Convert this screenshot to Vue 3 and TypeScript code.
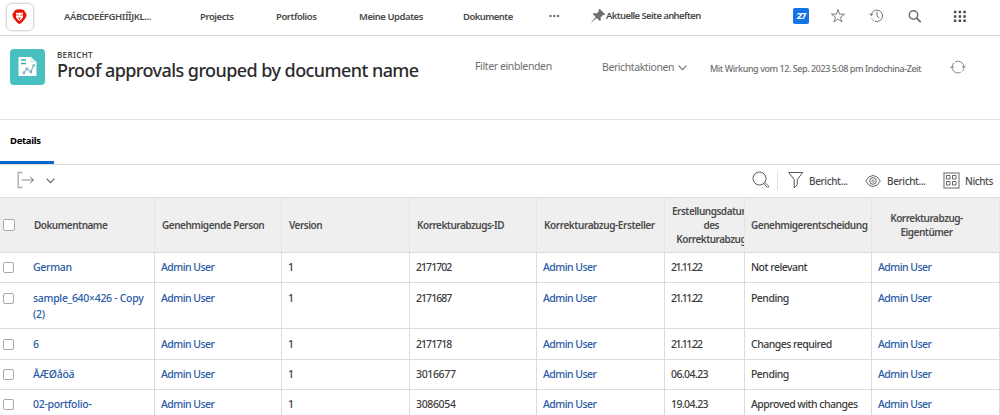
<script setup lang="ts">
interface Row {
  id: number
  name: string
  version: string
  proofId: string
  created: string
  decision: string
  height: number
}

const user = 'Admin User'
const headers: string[][] = [
  ['Dokumentname'], ['Genehmigende Person'], ['Version'], ['Korrekturabzugs-ID'],
  ['Korrekturabzug-Ersteller'], ['Erstellungsdatum', 'des', 'Korrekturabzug'], ['Genehmigerentscheidung'],
  ['Korrekturabzug-', 'Eigentümer'],
]
const rows: Row[] = [
  { id: 1, name: 'German', version: '1', proofId: '2171702', created: '21.11.22', decision: 'Not relevant', height: 30 },
  { id: 2, name: 'sample_640×426 - Copy (2)', version: '1', proofId: '2171687', created: '21.11.22', decision: 'Pending', height: 46 },
  { id: 3, name: '6', version: '1', proofId: '2171718', created: '21.11.22', decision: 'Changes required', height: 31 },
  { id: 4, name: 'ÅÆØåöä', version: '1', proofId: '3016677', created: '06.04.23', decision: 'Pending', height: 30 },
  { id: 5, name: '02-portfolio-', version: '1', proofId: '3086054', created: '19.04.23', decision: 'Approved with changes', height: 46 },
]

// Figures with many narrow ones are set tighter.
const isTight = (value: string): boolean => (value.match(/1/g) ?? []).length > 1
</script>

<template>
  <div class="page">
    <nav class="topbar">
      <span class="logo">
        <svg width="27" height="28" viewBox="0 0 27 28">
          <path d="M9.2 7Q13.500 5.300 17.800 7L20.600 11.500Q20.200 16.500 13.500 21.200Q6.800 16.500 6.400 11.500Z" fill="#eb1000" />
          <path d="M9.700 9.500l2.200.6 1.600-.7 1.600.7 2.200-.6-.6 2.600.4 2-1.800 2.500-1.800 1.300-1.800-1.300-1.800-2.500.4-2z" fill="#fff" />
          <path d="M10.600 11.600l2.100.9M16.400 11.600l-2.100.9M12.600 14.800h1.800l-.9 1zM13.500 15.800v1" fill="none" stroke="#eb1000" stroke-width=".8" />
        </svg>
      </span>
      <a class="n1">AÁBCDEÉFGHIÍÎJKL...</a>
      <a class="n2">Projects</a>
      <a class="n3">Portfolios</a>
      <a class="n4">Meine Updates</a>
      <a class="n5">Dokumente</a>
      <svg class="more" width="12" height="4" viewBox="0 0 12 4" fill="#6e6e6e">
        <circle cx="1.500" cy="2" r="1.200" /><circle cx="5.300" cy="2" r="1.200" /><circle cx="9.100" cy="2" r="1.200" />
      </svg>
      <span class="pin">
        <svg width="15" height="15" viewBox="0 0 15 15" fill="#6e6e6e">
          <path d="M8.600.8l5.600 5.500-.8 1-1.400-.3-2.400 2.400.2 2.800-1 .9-3.200-3.200L.5 14.500l-.3-.3 4.500-5.100L1.800 6l1-.9 2.800.3L8 3 7.700 1.700z" />
        </svg>
        <b>Aktuelle Seite anheften</b>
      </span>
      <span class="count">27</span>
      <svg class="star" width="16" height="16" viewBox="0 0 16 16" fill="none" stroke="#6e6e6e" stroke-width=".9">
        <path d="M7 1.500l1.500 4.600 5 .1-4 3 1.450 4.700L7 11l-4 2.900 1.500-4.700-4-3 5-.1z" />
      </svg>
      <svg class="history" width="16" height="16" viewBox="0 0 16 16" fill="none" stroke="#6e6e6e">
        <path d="M2.200 7A5.700 5.700 0 1 1 6 13.200" />
        <path d="M4.800 12.700l-.9-.6M3.300 11.300l-.6-.9" />
        <path d="M.5 5.600l1.700 2 1.900-1.800M8 3.800v4.300l2.400 2" />
      </svg>
      <svg class="search" width="15" height="15" viewBox="0 0 15 15" fill="none" stroke="#6e6e6e">
        <circle cx="5.500" cy="6" r="4.200" stroke-width="1.500" /><path d="M8.800 9.200l3.400 3.400" stroke-width="1.900" stroke-linecap="round" />
      </svg>
      <svg class="apps" width="13" height="13" viewBox="0 0 13 13" fill="#4b4b4b">
        <path d="M.9.800h2.500v2.500H.9zM5.600.800h2.500v2.500H5.600zM10.300.800h2.500v2.500h-2.500zM.9 5.200h2.500v2.500H.9zM5.600 5.200h2.500v2.500H5.600zM10.300 5.200h2.500v2.500h-2.500zM.9 9.600h2.500v2.500H.9zM5.600 9.600h2.500v2.500H5.600zM10.300 9.600h2.500v2.500h-2.500z" />
      </svg>
    </nav>

    <header class="title-bar">
      <span class="report-icon">
        <svg width="35" height="36" viewBox="0 0 35 36">
          <path d="M8.500 8h12.500l5.500 5v14h-18z" fill="#fff" />
          <path d="M20.500 8v5.500h6" fill="#d7f0ef" />
          <path d="M11 11h5M11 14.500h5" stroke="#3ea9ad" stroke-width="1.300" />
          <path d="M13.800 23.800l3-4 4 3.200 3-7" fill="none" stroke="#5baeb7" />
          <g fill="#fff" stroke="#3e8aa6" stroke-width=".8"><circle cx="13.800" cy="23.800" r="1" /><circle cx="16.800" cy="19.800" r="1" /><circle cx="20.800" cy="23" r="1" /><circle cx="23.700" cy="16.500" r="1" /></g>
        </svg>
      </span>
      <div class="heading">
        <span class="eyebrow">BERICHT</span>
        <h1>Proof approvals grouped by document name</h1>
      </div>
      <span class="filter">Filter einblenden</span>
      <span class="actions">Berichtaktionen
        <svg width="9" height="6" viewBox="0 0 9 6" fill="none" stroke="#6e6e6e" stroke-width="1.100"><path d="M.6.7l3.900 4 3.900-4" /></svg>
      </span>
      <span class="asof">Mit Wirkung vom 12. Sep. 2023 5:08 pm Indochina-Zeit</span>
      <svg class="refresh" width="16" height="16" viewBox="0 0 16 16" fill="none" stroke="#777" stroke-width=".9">
        <path d="M2.200 7.200A6 6 0 0 1 4 3.700M5.300 2.800A6 6 0 0 1 14 8.500M13.800 9.500A6 6 0 0 1 12 12.500M10.700 13.300A6 6 0 0 1 2 8" />
        <path d="M11.900 7.300l2.100 1.600 1.500-2M.4 9.200L2 7.200l2 1.600" />
      </svg>
    </header>

    <div class="tabs"><span class="tab">Details</span></div>

    <div class="toolbar">
      <svg class="export" width="18" height="18" viewBox="0 0 18 18" fill="none">
        <path d="M5.500 1.500H1.200v15h4.300" stroke="#aaa" stroke-width="1.400" />
        <path d="M4.500 9h12" stroke="#888" /><path d="M13.200 5.800L16.400 9l-3.200 3.200" stroke="#666" />
      </svg>
      <svg class="chev" width="9" height="6" viewBox="0 0 9 6" fill="none" stroke="#666" stroke-width="1.200"><path d="M.6.7l3.900 4 3.900-4" /></svg>
      <svg class="find" width="18" height="18" viewBox="0 0 18 18" fill="none" stroke="#5c5c5c">
        <circle cx="7.500" cy="7.500" r="6.500" /><path d="M12.600 11.400l4 3.600q.5 1.700-1.300 1.400l-3.800-4.100" stroke-width=".9" />
      </svg>
      <span class="divider"></span>
      <svg class="funnel" width="16" height="18" viewBox="0 0 16 18" fill="none" stroke="#555" stroke-linejoin="round"><path d="M.7 1.500h14L9.300 8.500v5.200L6.200 16.800V8.500z" /></svg>
      <span class="tool">Bericht...</span>
      <svg class="eye" width="16" height="14" viewBox="0 0 16 14" fill="none" stroke="#666"><path d="M.7 7Q3.500 1.500 8 1.500T15.300 7Q12.500 12.500 8 12.500T.7 7z" /><circle cx="8" cy="7" r="3.300" /><circle cx="8" cy="7" r="1.200" stroke-width=".7" /></svg>
      <span class="tool">Bericht...</span>
      <svg class="grid-icon" width="17" height="17" viewBox="0 0 17 17" fill="none" stroke="#666"><rect x="1" y="1" width="15" height="15" stroke="#999" stroke-width="1.500" /><path d="M3.500 3.500h3.500V7H3.500zM9.500 3.500h3.500V7H9.500zM3.500 9.500h3.500v3.500H3.500zM9.500 9.500h3.500v3.500H9.500z" /></svg>
      <span class="tool">Nichts</span>
    </div>

    <div class="table">
      <div class="tr head">
        <span class="check"><i></i></span>
        <span v-for="(lines, i) in headers" :key="i" class="th" :class="`h${i}`">
          <span class="label"><span v-for="line in lines" :key="line" class="line">{{ line }}</span></span>
        </span>
      </div>
      <div v-for="r in rows" :key="r.id" class="tr" :class="{ roomy: r.height > 30 && r.id < 5 }" :style="{ height: `${r.height}px` }">
        <span class="check"><i></i></span>
        <span class="td link name">{{ r.name }}</span>
        <span class="td link">{{ user }}</span>
        <span class="td">{{ r.version }}</span>
        <span class="td num" :class="{ tight: isTight(r.proofId) }">{{ r.proofId }}</span>
        <span class="td link">{{ user }}</span>
        <span class="td date" :class="{ tight: isTight(r.created) }">{{ r.created }}</span>
        <span class="td decision">{{ r.decision }}</span>
        <span class="td link">{{ user }}</span>
      </div>
    </div>
  </div>
</template>

<style>
html, body { margin: 0; overflow: hidden; background: #fff; }
</style>

<style scoped>
.page { width: 1000px; height: 415px; overflow: hidden; font-family: "Noto Sans", "Open Sans", sans-serif; font-size: 10.5px; color: #4b4b4b; background: #fff; }
.page * { box-sizing: border-box; }
.page svg { display: block; flex: none; }
.topbar { height: 36px; border-bottom: 1px solid #d0d0d0; display: grid; grid-template-columns: 64px 136px 76px 83px 104px 86px 42px 202px 38px 38px 39px 45px 47px; align-items: center; white-space: nowrap; padding-bottom: 3px; }
.topbar a, .pin b { font-weight: 600; font-size: 9.5px; line-height: 13px; letter-spacing: -.45px; }
.topbar .n1 { letter-spacing: -.4px; }
.topbar .n5 { letter-spacing: -.55px; }
.pin b { letter-spacing: -.6px; }
.logo { width: 28px; height: 28px; margin: 1px 0 0 6px; border: 1px solid #d8d8d8; border-radius: 6px; box-shadow: 0 0 0 1px #f2f2f2; }
.logo svg { margin: -1px; }
.more { justify-self: start; }
.pin { display: flex; align-items: center; margin-top: -1px; }
.count { width: 16px; height: 16px; border-radius: 2px; background: #1473e6; color: #fff; font-weight: 700; font-size: 9.5px; line-height: 15px; text-align: center; letter-spacing: -.9px; }
.title-bar { height: 84px; border-bottom: 1px solid #e0e0e0; display: grid; grid-template-columns: 57px 418px 127px 108px 240px 40px; align-items: start; white-space: nowrap; color: #6e6e6e; }
.report-icon { width: 35px; height: 36px; margin: 13px 0 0 10px; border-radius: 4px; background: #47c0bf; }
.heading { padding-top: 14px; }
.eyebrow { display: block; color: #4b4b4b; font-size: 8px; line-height: 10px; font-weight: 600; letter-spacing: .35px; }
h1 { margin: 0; font-size: 18px; line-height: 21px; font-weight: 500; color: #2c2c2c; letter-spacing: -.57px; }
.filter { margin-top: 23px; line-height: 15px; letter-spacing: -.38px; }
.actions { display: flex; align-items: center; gap: 4px; margin-top: 24px; line-height: 15px; letter-spacing: -.42px; }
.asof { margin-top: 26px; font-size: 9px; line-height: 14px; font-weight: 500; letter-spacing: -.44px; }
.refresh { margin-top: 23px; }
.tabs { height: 45px; border-bottom: 1px solid #dedede; }
.tab { display: block; width: 54px; height: 44px; padding: 13px 0 0 10px; border-bottom: 3px solid #0d66d0; font-size: 9.5px; line-height: 15px; font-weight: 700; letter-spacing: -.3px; color: #000; }
.toolbar { height: 32px; display: grid; grid-template-columns: 46px 706px 25px 11px 21px 56px 22px 56px 22px 35px; align-items: center; white-space: nowrap; }
.export { margin-left: 17px; margin-top: -3px; }
.find, .funnel { margin-top: -2px; }
.eye, .grid-icon { margin-top: -1px; }
.divider { width: 1px; height: 19px; margin-top: -1px; background: #dedede; }
.tool { font-size: 10px; line-height: 14px; font-weight: 500; letter-spacing: -.38px; }
.tr { display: grid; grid-template-columns: 27px 128px 127px 128px 127px 128px 80px 127px 128px; border-bottom: 1px solid #dcdcdc; }
.head { height: 56px; background: #efefef; border-top: 1px solid #dcdcdc; }
.th { display: flex; align-items: center; padding-left: 7px; font-size: 10px; line-height: 14px; font-weight: 600; letter-spacing: -.5px; border-right: 1px solid #e5e5e5; white-space: nowrap; overflow: hidden; }
.label { flex: none; text-align: center; }
.line { display: block; }
.h1 { letter-spacing: -.47px; }
.h4 { letter-spacing: -.42px; }
.h5 { letter-spacing: -.5px; }
.h6 { letter-spacing: -.48px; padding-left: 6px; }
.h7 { padding: 0 18px 0 0; justify-content: center; }
.check { padding: 9px 0 0 3px; }
.head .check { padding-top: 21px; }
.check i { display: block; width: 11px; height: 11px; background: #fff; border: 1px solid #aaa; border-radius: 2px; }
.head .check i { width: 12px; height: 12px; }
.td { padding: 6px 0 0 6px; font-size: 10.5px; line-height: 16px; font-weight: 500; border-right: 1px solid #dcdcdc; letter-spacing: -.53px; color: #3c3c3c; }
.roomy .td { padding-top: 7px; }
.roomy .check { padding-top: 10px; }
.link { color: #2a5ba5; }
.name { letter-spacing: -.3px; }
.num { letter-spacing: -.35px; }
.num.tight { letter-spacing: -.95px; }
.date { letter-spacing: -.6px; }
.date.tight { letter-spacing: -1.400px; }
.decision { letter-spacing: -.53px; }
</style>
